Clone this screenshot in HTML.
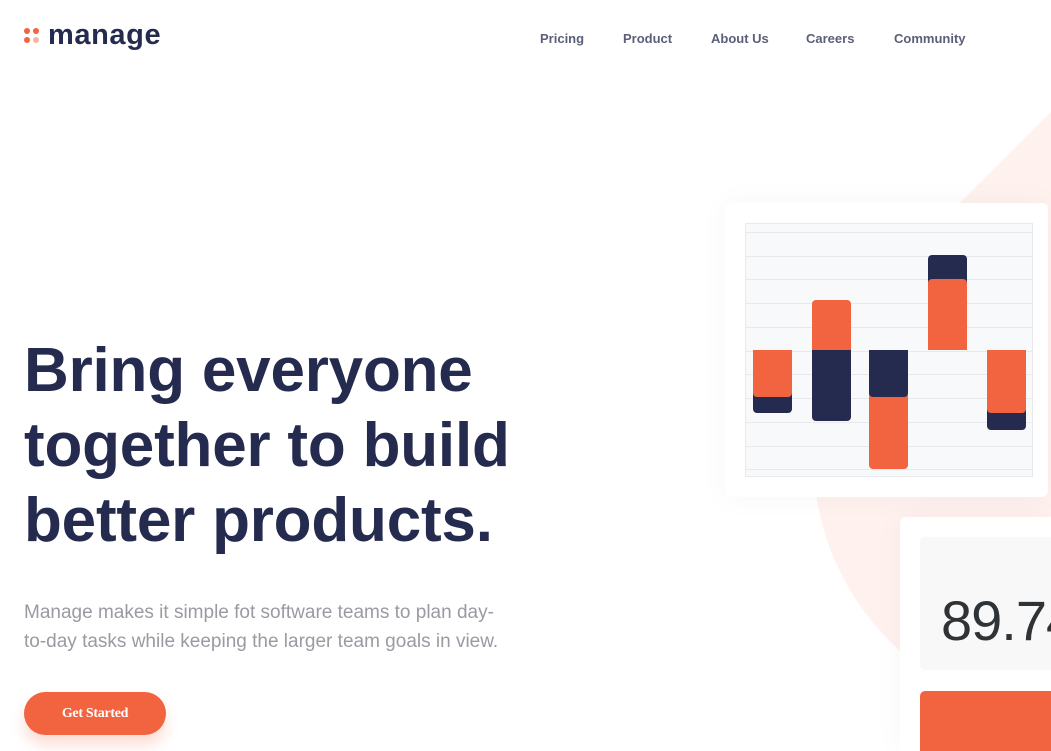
<!DOCTYPE html>
<html><head><meta charset="utf-8"><style>
*{margin:0;padding:0;box-sizing:border-box}
html,body{width:1051px;height:751px;overflow:hidden;background:#fff;font-family:"Liberation Sans",sans-serif;position:relative}
.abs{position:absolute}
.logo{top:19px;font-size:29px;font-weight:bold;color:#252b4e;letter-spacing:0.6px}
.dots{left:24px;top:28px}
.dots span{position:absolute;width:6px;height:6px;border-radius:50%;background:#f26340}
nav a{position:absolute;top:31px;font-size:13px;font-weight:bold;color:#5b5f78;text-decoration:none}
h1{position:absolute;left:24px;top:333px;font-size:62px;line-height:75px;color:#252b4e;font-weight:bold;letter-spacing:-0.2px;white-space:nowrap}
p{position:absolute;left:24px;top:598px;font-size:19px;line-height:29px;color:#9a9aa2;white-space:nowrap}
.btn{left:24px;top:692px;width:142px;height:43px;border-radius:22px;background:#f26340;color:#fff;font-family:"Liberation Serif",serif;font-weight:bold;font-size:14px;text-align:center;line-height:43px;box-shadow:0 10px 14px rgba(242,99,64,0.22);letter-spacing:-0.3px}
.peach{left:830px;top:157px;width:600px;height:600px;background:#fff1ee;border-radius:0 0 0 260px;transform:rotate(45deg);transform-origin:center}
.card1{left:725px;top:203px;width:323px;height:294px;background:#fff;border-radius:6px;box-shadow:0 0 30px rgba(0,0,0,0.04)}
.chart{left:745px;top:223px;width:288px;height:254px;background:#f8f9fa;border:1px solid #e8e9ec}
.g{position:absolute;left:0;right:0;height:1px;background:#e8e9ec}
.b{position:absolute;width:39px}
.card2{left:900px;top:517px;width:151px;height:234px;background:#fff;border-radius:6px 0 0 0;box-shadow:0 0 30px rgba(0,0,0,0.04)}
.num{left:920px;top:537px;width:131px;height:133px;background:#f8f8f9;border-radius:5px 0 0 5px;font-size:56px;color:#2f3336;padding:54px 0 0 21px;line-height:60px;letter-spacing:-1px;overflow:hidden;white-space:nowrap}
.or{left:920px;top:691px;width:131px;height:60px;background:#f26340;border-radius:5px 0 0 0}
</style></head><body>
<div class="abs peach"></div>
<div class="abs dots"><span style="left:0;top:0"></span><span style="left:9px;top:0"></span><span style="left:0;top:9px"></span><span style="left:9px;top:9px;background:#f7b3a2"></span></div>
<div class="abs logo" style="left:48px">manage</div>
<nav><a style="left:540px">Pricing</a><a style="left:623px">Product</a><a style="left:711px">About Us</a><a style="left:806px">Careers</a><a style="left:894px">Community</a></nav>
<h1>Bring everyone<br>together to build<br>better products.</h1>
<p>Manage makes it simple fot software teams to plan day-<br>to-day tasks while keeping the larger team goals in view.</p>
<div class="abs btn">Get Started</div>
<div class="abs card1"></div>
<div class="abs chart">
<div class="g" style="top:8px"></div><div class="g" style="top:32px"></div><div class="g" style="top:55px"></div><div class="g" style="top:79px"></div><div class="g" style="top:103px"></div><div class="g" style="top:127px"></div><div class="g" style="top:150px"></div><div class="g" style="top:174px"></div><div class="g" style="top:198px"></div><div class="g" style="top:222px"></div><div class="g" style="top:245px"></div>
<div class="b" style="left:7px;top:126px;height:63px;background:#252b4e;border-radius:0 0 4px 4px"></div>
<div class="b" style="left:7px;top:126px;height:47px;background:#f26340;border-radius:0 0 4px 4px"></div>
<div class="b" style="left:66px;top:76px;height:50px;background:#f26340;border-radius:4px 4px 0 0"></div>
<div class="b" style="left:66px;top:126px;height:71px;background:#252b4e;border-radius:0 0 4px 4px"></div>
<div class="b" style="left:123px;top:126px;height:119px;background:#f26340;border-radius:0 0 4px 4px"></div>
<div class="b" style="left:123px;top:126px;height:47px;background:#252b4e;border-radius:0 0 4px 4px"></div>
<div class="b" style="left:182px;top:31px;height:95px;background:#252b4e;border-radius:4px 4px 0 0"></div>
<div class="b" style="left:182px;top:55px;height:71px;background:#f26340;border-radius:4px 4px 0 0"></div>
<div class="b" style="left:241px;top:126px;height:80px;background:#252b4e;border-radius:0 0 4px 4px"></div>
<div class="b" style="left:241px;top:126px;height:63px;background:#f26340;border-radius:0 0 4px 4px"></div>
</div>
<div class="abs card2"></div>
<div class="abs num">89.74</div>
<div class="abs or"></div>
</body></html>
